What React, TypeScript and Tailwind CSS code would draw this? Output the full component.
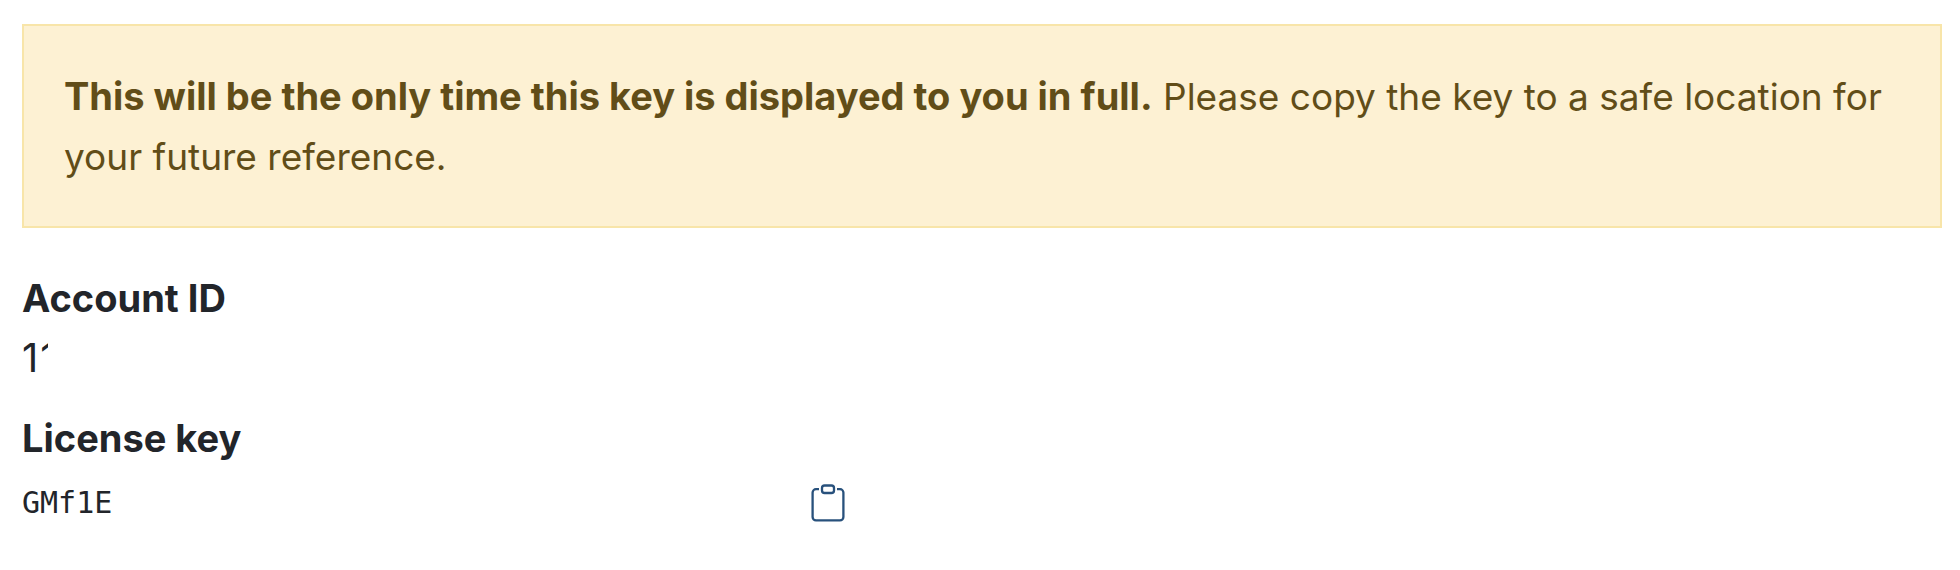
function ClipboardIcon() {
  return (
    <svg
      viewBox="0 0 34 38"
      className="h-[38px] w-[34px]"
      fill="none"
      stroke="currentColor"
      strokeWidth="2.3"
      aria-hidden="true"
    >
      <path d="M8 5.2H5A3.4 3.4 0 0 0 1.6 8.600V33A3.400 3.400 0 0 0 5 36.400H29A3.400 3.400 0 0 0 32.400 33V8.600A3.400 3.400 0 0 0 29 5.200H26" />
      <rect x="11" y="1.500" width="12" height="7.500" rx="2.600" />
    </svg>
  );
}

export default function App() {
  return (
    <main className="min-h-screen bg-white py-6 pr-[18px] pl-[22px] font-['Inter',sans-serif] text-[37px]/[60px] text-[#22252a]">
      <div role="alert" className="mb-10 border-2 border-[#f8e5a9] bg-[#fdf1d3] px-10 pt-[41px] pb-[39px] text-[#614d18]">
        <strong className="text-[38px]/10 font-bold">This will be the only time this key is displayed to you in full.</strong>{" "}
        Please copy the key to a safe location for your future reference.
      </div>
      <dl>
        <dt className="text-[38px]/[60px] font-bold">Account ID</dt>
        <dd className="mb-5 flex text-[40px]/[60px]">
          <span>1</span>
          <span className="ml-0.5 h-[25px] w-2 overflow-hidden">1</span>
        </dd>
        <dt className="text-[38px]/[60px] font-bold">License key</dt>
        <dd className="flex h-[70px] max-w-[823px] items-center justify-between">
          <code className="font-['DejaVu_Sans_Mono',monospace] text-[30px]/[60px]">GMf1E</code>
          <button type="button" aria-label="Copy license key" className="text-[#28517c]">
            <ClipboardIcon />
          </button>
        </dd>
      </dl>
    </main>
  );
}
